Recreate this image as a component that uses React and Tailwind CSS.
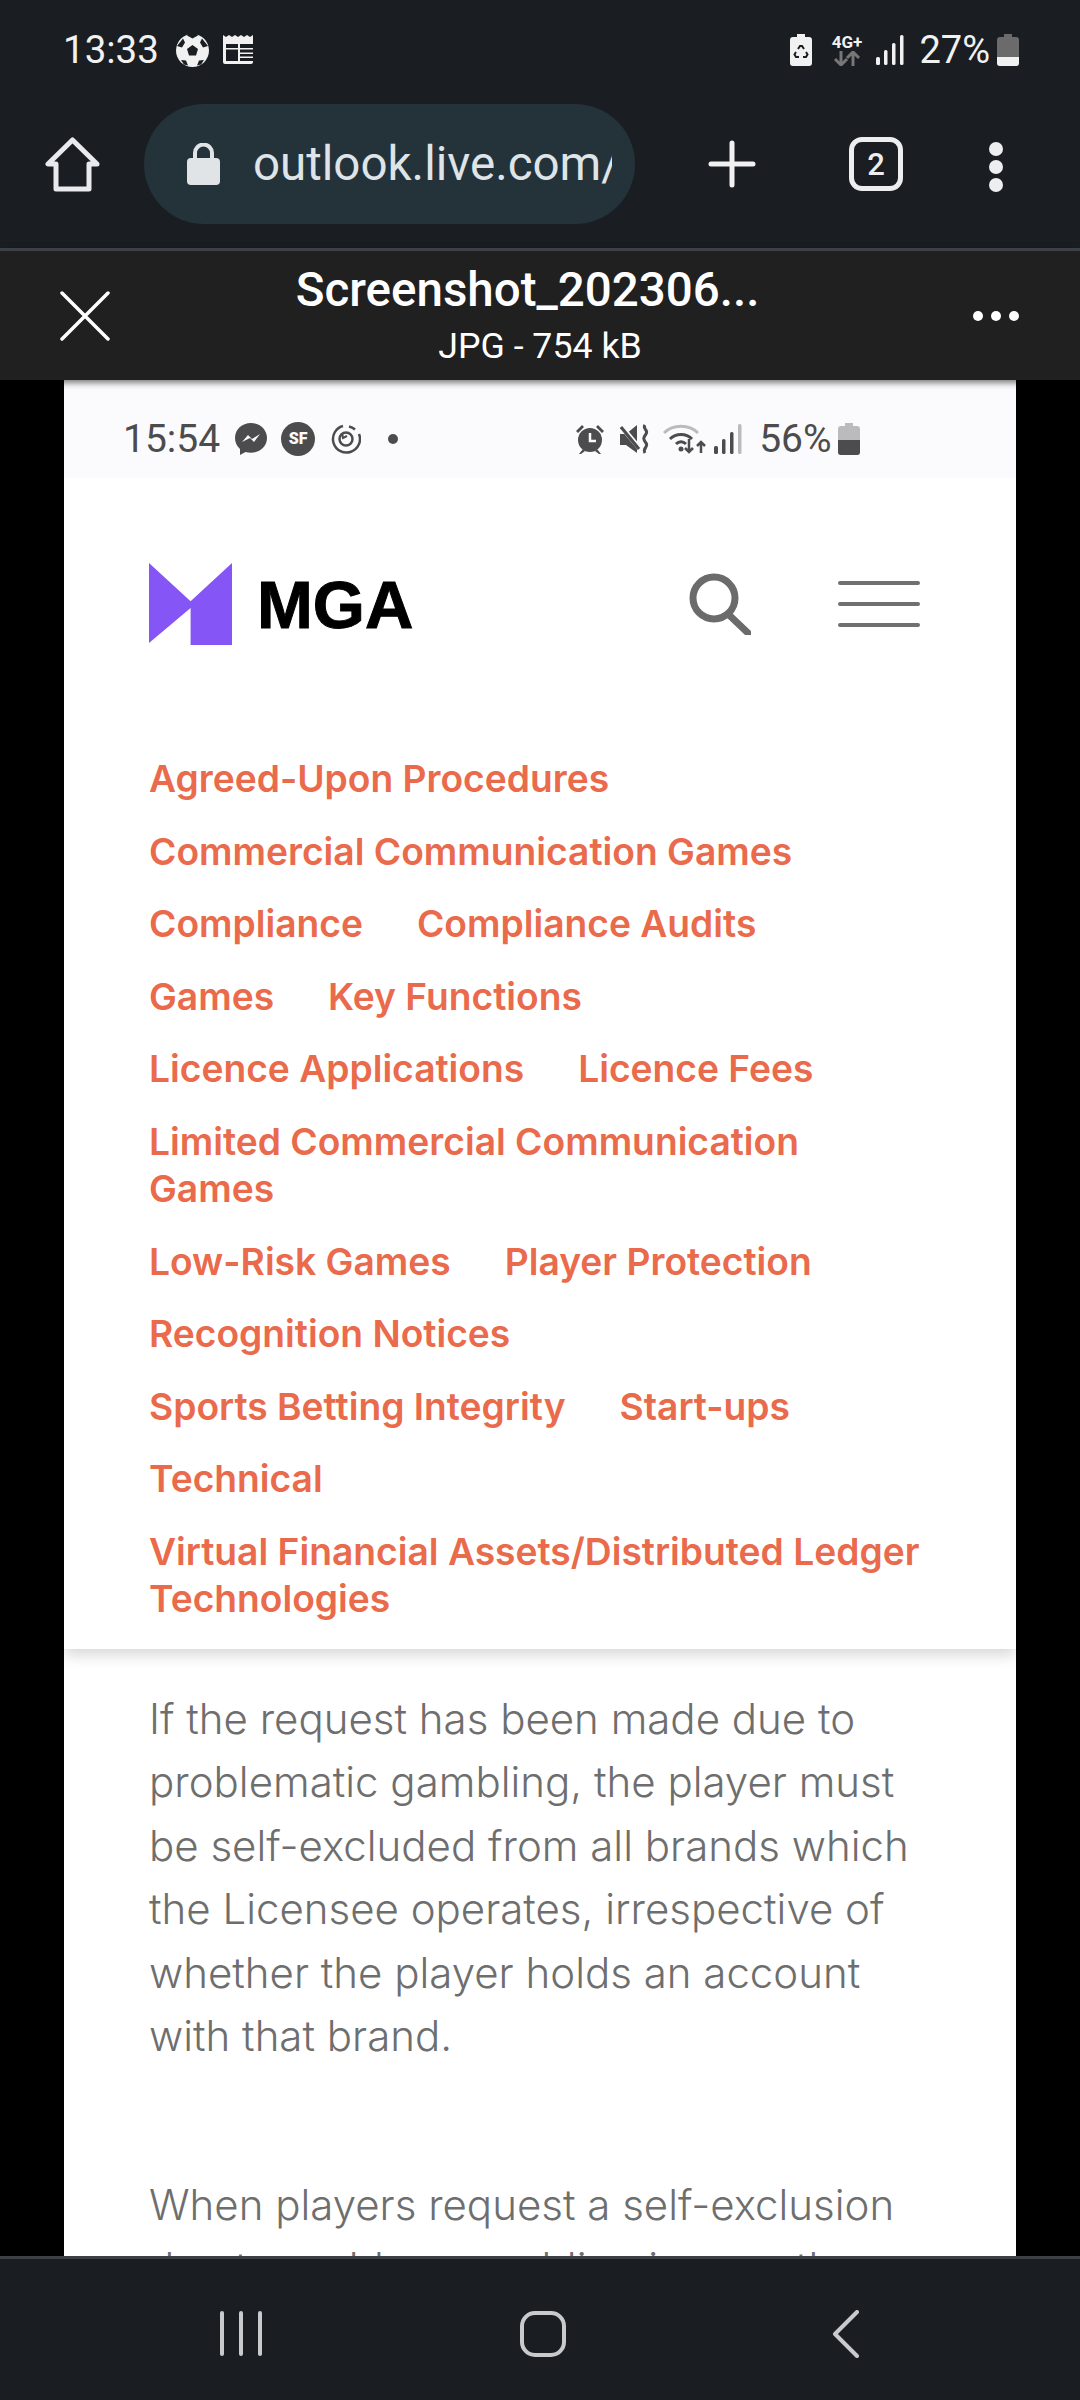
const roboto = { fontFamily: 'Roboto, sans-serif' }

const links = [
  ['Agreed-Upon Procedures'],
  ['Commercial Communication Games'],
  ['Compliance', 'Compliance Audits'],
  ['Games', 'Key Functions'],
  ['Licence Applications', 'Licence Fees'],
  ['Limited Commercial Communication Games'],
  ['Low-Risk Games', 'Player Protection'],
  ['Recognition Notices'],
  ['Sports Betting Integrity', 'Start-ups'],
  ['Technical'],
  ['Virtual Financial Assets/Distributed Ledger Technologies'],
]

function SoccerBall() {
  return (
    <svg width="33" height="33" viewBox="0 0 33 33">
      <circle cx="16.5" cy="16.5" r="16.5" fill="#f1f1f1" />
      <path d="M16.5 11l5.500 4-2 6.500h-7l-2-6.500zM11 1.500l5.500 3 5.500-3-1-1.500h-9zM1 12l5 1.500 3-5-2-4zM32 12l-5 1.500-3-5 2-4zM5 26l5 .5 2 5-4-1zM28 26l-5 .5-2 5 4-1z" fill="#1a1d21" />
    </svg>
  )
}

function Newspaper() {
  return (
    <svg width="33" height="30" viewBox="0 0 33 30" fill="#f1f1f1">
      <path d="M0 0l3 2 3-2 3 2 3-2 3 2 3-2 3 2 3-2 3 2 3-2v27a2 2 0 0 1-2 2H2a2 2 0 0 1-2-2z" />
      <path d="M3 9h27v17H3z" fill="#1a1d21" />
      <path d="M3 13h27v1.500H3zM15 9h2v17h-2zM17 17.500h13v1.500H17zM17 21.500h13v1.500H17z" />
    </svg>
  )
}

function RecycleBattery() {
  return (
    <svg width="22" height="32" viewBox="0 0 22 32">
      <path d="M7 0h8v3h4a3 3 0 0 1 3 3v23a3 3 0 0 1-3 3H3a3 3 0 0 1-3-3V6a3 3 0 0 1 3-3h4z" fill="#f1f1f1" />
      <path d="M8 15l2-3h2l2 3M6 18l-1.500 2.500L6 23h3M16 18l1.500 2.500L16 23h-3" fill="none" stroke="#1a1d21" strokeWidth="2" />
    </svg>
  )
}

function Signal({ color, dim }) {
  return (
    <svg width="28" height="30" viewBox="0 0 28 30" fill={color}>
      <rect x="0" y="22" width="4" height="8" rx="1.500" />
      <rect x="8" y="15" width="3.500" height="15" rx="1.500" />
      <rect x="16" y="8" width="3.500" height="22" rx="1.500" />
      <rect x="24" y="0" width="3.500" height="30" rx="1.500" fill={dim || color} />
    </svg>
  )
}

function Battery({ body, fill, level }) {
  return (
    <svg width="22" height="32" viewBox="0 0 22 32">
      <path d="M7 0h8v3h4a3 3 0 0 1 3 3v23a3 3 0 0 1-3 3H3a3 3 0 0 1-3-3V6a3 3 0 0 1 3-3h4z" fill={body} />
      <path d={`M0 ${level}h22v${29 - level}a3 3 0 0 1-3 3H3a3 3 0 0 1-3-3z`} fill={fill} />
    </svg>
  )
}

function TopBar() {
  return (
    <div className="bg-[#1a1d21] h-[248px] shrink-0">
      <div className="h-[100px] flex items-center pl-[63px] pr-[61px] text-[#f1f1f1]" style={roboto}>
        <span className="text-[38.500px] leading-none">13:33</span>
        <span className="ml-[17px] flex"><SoccerBall /></span>
        <span className="ml-[14px] flex"><Newspaper /></span>
        <span className="ml-auto flex"><RecycleBattery /></span>
        <div className="ml-[18px] w-[33px] flex flex-col items-center">
          <span className="text-[17px] leading-[17px] font-bold">4G+</span>
          <svg width="30" height="15" viewBox="0 0 30 15" fill="none" stroke="#777" strokeWidth="3">
            <path d="M9 0v13M3 8l6 6 6-6M21 15V2M15 7l6-6 6 6" />
          </svg>
        </div>
        <span className="ml-[13px] flex"><Signal color="#f1f1f1" /></span>
        <span className="ml-[15px] text-[38px] leading-none">27%</span>
        <span className="ml-[7px] flex"><Battery body="#6b6b6b" fill="#f1f1f1" level="23" /></span>
      </div>
      <div className="h-[148px] flex items-start pt-[4px]">
        <svg className="ml-[45px] mt-[33px]" width="55" height="55" viewBox="0 0 55 55" fill="none" stroke="#e8eaed" strokeWidth="5" strokeLinejoin="round">
          <path d="M27.500 3L3 27h8v25h33V27h8z" />
        </svg>
        <div className="ml-[44px] w-[491px] h-[120px] rounded-[60px] bg-[#24323a] flex items-center pl-[43px]">
          <svg width="33" height="42" viewBox="0 0 33 42" fill="#e0e4e7">
            <path d="M8 16V10a8.500 8.500 0 0 1 17 0v6" fill="none" stroke="#e0e4e7" strokeWidth="4" />
            <rect x="0" y="15" width="33" height="27" rx="4" />
          </svg>
          <div className="ml-[33px] w-[359px] overflow-hidden whitespace-nowrap text-[47.500px] leading-[56px] text-[#dfe4e8]" style={roboto}>
            outlook.live.com/
          </div>
        </div>
        <svg className="ml-[73px] mt-[36px]" width="48" height="48" viewBox="0 0 48 48" stroke="#f1f1f1" strokeWidth="5" strokeLinecap="round">
          <path d="M24 3v42M3 24h42" />
        </svg>
        <div className="ml-[93px] mt-[33px] w-[54px] h-[54px] rounded-[13px] border-[5px] border-[#eceef0] flex items-center justify-center text-[#eceef0] text-[31px] font-medium leading-none" style={roboto}>
          2
        </div>
        <div className="ml-[86px] mt-[38px] flex flex-col gap-[4px]">
          <div className="w-[14px] h-[14px] rounded-full bg-[#eceef0]" />
          <div className="w-[14px] h-[14px] rounded-full bg-[#eceef0]" />
          <div className="w-[14px] h-[14px] rounded-full bg-[#eceef0]" />
        </div>
      </div>
    </div>
  )
}

function ViewerHeader() {
  return (
    <div className="relative h-[132px] shrink-0 bg-[#202020] border-t-[3px] border-[#3c4147] shadow-[0_3px_6px_rgba(0,0,0,0.5)] flex items-center pl-[60px] pr-[61px] text-white z-10" style={roboto}>
      <svg width="50" height="50" viewBox="0 0 50 50" stroke="#fff" strokeWidth="3.500" strokeLinecap="round">
        <path d="M2 2l46 46M48 2L2 48" />
      </svg>
      <div className="flex-1 flex flex-col items-center">
        <span className="text-[47.500px] leading-[52px] font-medium pr-[28px]">Screenshot_202306...</span>
        <span className="text-[35.700px] leading-[42px] mt-[9px] pr-[3px]">JPG - 754 kB</span>
      </div>
      <div className="flex gap-[8px]">
        <div className="w-[10px] h-[10px] rounded-full bg-white" />
        <div className="w-[10px] h-[10px] rounded-full bg-white" />
        <div className="w-[10px] h-[10px] rounded-full bg-white" />
      </div>
    </div>
  )
}

function PageStatus() {
  const c = '#4c4c4e'
  return (
    <div className="h-[98px] pt-[20px] bg-[#fbfbfd] flex items-center pl-[59px] text-[#4c4c4e]" style={roboto}>
      <span className="text-[39px] leading-none">15:54</span>
      <svg className="ml-[15px]" width="32" height="32" viewBox="0 0 32 32">
        <path d="M16 0C7 0 0 6.500 0 15c0 4.500 2 8.500 5 11v6l5.500-3c1.800.5 3.600.8 5.500.8 9 0 16-6.500 16-14.800S25 0 16 0z" fill={c} />
        <path d="M7 19l6-7 4 4 8-5-6 8-4-4z" fill="#fbfbfd" />
      </svg>
      <div className="ml-[14px] w-[34px] h-[34px] rounded-full bg-[#4c4c4e] text-[#fbfbfd] text-[16px] font-black flex items-center justify-center leading-none">SF</div>
      <svg className="ml-[16px]" width="30" height="30" viewBox="0 0 30 30" fill="none" stroke={c} strokeWidth="2.500">
        <path d="M12 2a13.500 13.500 0 1 0 16 8M18 2.500a13 13 0 0 1 6 3" />
        <circle cx="15" cy="15" r="6.500" />
        <path d="M11 9l1 5 4-2" strokeWidth="2" />
      </svg>
      <div className="ml-[27px] w-[10px] h-[10px] rounded-full bg-[#4c4c4e]" />
      <svg className="ml-[177px]" width="30" height="30" viewBox="0 0 30 30" fill={c}>
        <circle cx="15" cy="16" r="12" />
        <path d="M1 7l6-6 2 2-6 6zM29 7l-6-6-2 2 6 6zM4 30l4-5 2 2-4 3zM26 30l-4-5-2 2 4 3z" />
        <path d="M15 9v8h6" fill="none" stroke="#fbfbfd" strokeWidth="2.500" />
      </svg>
      <svg className="ml-[15px]" width="31" height="30" viewBox="0 0 31 30">
        <path d="M0 10h6l11-9v28l-11-8H0z" fill={c} />
        <path d="M1 2l20 24" stroke="#fbfbfd" strokeWidth="5" />
        <path d="M1 3l18 22" stroke={c} strokeWidth="3" />
        <path d="M25 1c-3 4 4 5 1 9s-3 5 0 9-4 5-1 10" fill="none" stroke={c} strokeWidth="3" />
      </svg>
      <svg className="ml-[12px]" width="43" height="30" viewBox="0 0 43 30" fill="none">
        <path d="M1 9c9-9 25-9 34 0" stroke="#bbb" strokeWidth="3" />
        <path d="M7 15c6-6 16-6 22 0M13 20c3-3 7-3 10 0" stroke={c} strokeWidth="3" />
        <circle cx="18" cy="25" r="2.500" fill={c} />
        <path d="M26 15v13M22 24l4 4 4-4M38 29V18M34 22l4-4 4 4" stroke={c} strokeWidth="2.500" />
      </svg>
      <span className="ml-[8px] flex"><Signal color={c} dim="#bbb" /></span>
      <span className="ml-[17px] text-[39px] leading-none">56%</span>
      <span className="ml-[6px] flex"><Battery body="#bbb" fill={c} level="17" /></span>
    </div>
  )
}

function Logo() {
  return (
    <div className="flex items-center">
      <svg width="83" height="82" viewBox="0 0 83 82" fill="#8555f5">
        <path d="M0 0l41.600 38.300L83 0v82H41.600V45L0 80z" />
      </svg>
      <span className="ml-[25px] text-[67px] leading-none font-bold text-black [-webkit-text-stroke:1px_black]" style={{ fontFamily: '"Liberation Sans", sans-serif' }}>MGA</span>
    </div>
  )
}

function SiteHeader() {
  return (
    <div className="bg-white shadow-[0_6px_14px_rgba(0,0,0,0.16)] relative pb-[27px]">
      <PageStatus />
      <div className="pl-[85px] pr-[96px] pt-[85px] flex items-center">
        <Logo />
        <svg className="ml-auto" width="62" height="62" viewBox="0 0 62 62" fill="none" stroke="#6b6b6b" strokeWidth="7" strokeLinecap="round">
          <circle cx="25" cy="25" r="21" />
          <path d="M39 41l20 19" />
        </svg>
        <div className="ml-[87px] flex flex-col gap-[17px]">
          <div className="w-[82px] h-[4px] rounded-full bg-[#707070]" />
          <div className="w-[82px] h-[4px] rounded-full bg-[#707070]" />
          <div className="w-[82px] h-[4px] rounded-full bg-[#707070]" />
        </div>
      </div>
      <div className="pl-[85px] pr-[89px] pt-[110px] flex flex-col gap-[25.600px] text-[37.200px] leading-[47px] font-semibold text-[#ea6a4c]" style={{ fontFamily: 'Inter, sans-serif' }}>
        {links.map((row, i) => (
          <div key={i} className="flex flex-wrap gap-x-[54px]">
            {row.map((t) => <span key={t}>{t}</span>)}
          </div>
        ))}
      </div>
    </div>
  )
}

function Article() {
  return (
    <div className="pl-[85px] pr-[97px] pt-[38px] text-[42px] leading-[63.500px] font-light text-[#6e6e6e]" style={{ fontFamily: 'Inter, sans-serif' }}>
      <p>If the request has been made due to problematic gambling, the player must be self-excluded from all brands which the Licensee operates, irrespective of whether the player holds an account with that brand.</p>
      <p className="mt-[105px]">When players request a self-exclusion due to problem gambling issues, the</p>
    </div>
  )
}

function BottomNav() {
  return (
    <div className="h-[144px] shrink-0 bg-[#1a1d21] border-t-[3px] border-[#3c4147] flex items-center pt-[8px] pl-[220px]">
      <div className="flex gap-[15px]">
        <div className="w-[4px] h-[45px] rounded-full bg-[#c8cacc]" />
        <div className="w-[4px] h-[45px] rounded-full bg-[#c8cacc]" />
        <div className="w-[4px] h-[45px] rounded-full bg-[#c8cacc]" />
      </div>
      <div className="ml-[258px] w-[46px] h-[46px] rounded-[15px] border-[4px] border-[#c8cacc]" />
      <svg className="ml-[266px]" width="28" height="48" viewBox="0 0 28 48" fill="none" stroke="#c8cacc" strokeWidth="4" strokeLinecap="round" strokeLinejoin="round">
        <path d="M25 2L3 24l22 22" />
      </svg>
    </div>
  )
}

export default function App() {
  return (
    <div className="w-[1080px] h-[2400px] flex flex-col overflow-hidden bg-black">
      <TopBar />
      <ViewerHeader />
      <div className="flex-1 min-h-0 mx-[64px] bg-white overflow-hidden">
        <SiteHeader />
        <Article />
      </div>
      <BottomNav />
    </div>
  )
}
